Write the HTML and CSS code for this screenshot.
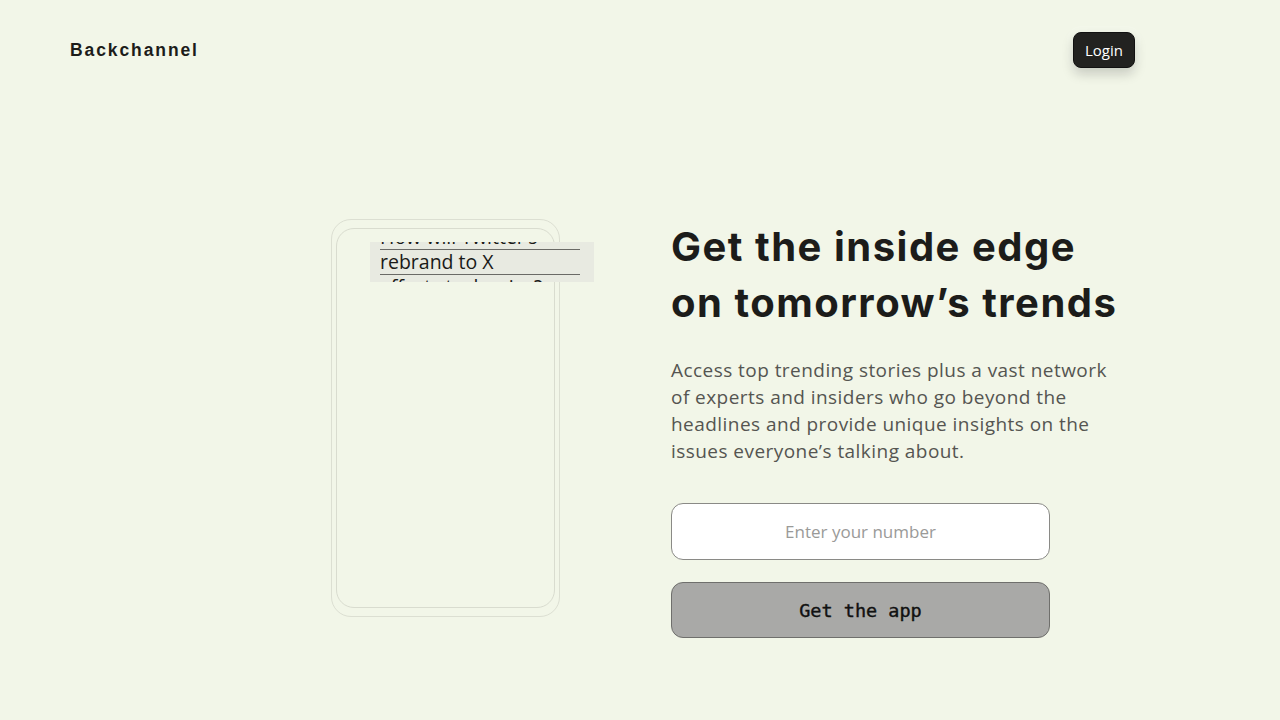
FILE: index.html
```html
<!DOCTYPE html>
<html lang="en">
<head>
<meta charset="utf-8">
<title>Backchannel</title>
<link rel="stylesheet" href="styles.css">
</head>
<body>
<header class="topbar">
  <div class="brand">Backchannel</div>
  <button class="login">Login</button>
</header>
<main class="hero">
  <div class="phone">
    <div class="phone-inner"></div>
    <div class="story">
      <div class="story-text">
        <span class="line">How will Twitter’s</span>
        <span class="line">rebrand to X</span>
        <span class="line">affect stock price?</span>
      </div>
    </div>
  </div>
  <section class="content">
    <h1 class="title">Get the inside edge<br>on tomorrow’s trends</h1>
    <p class="lede">Access top trending stories plus a vast network of experts and insiders who go beyond the headlines and provide unique insights on the issues everyone’s talking about.</p>
    <input class="number" type="tel" placeholder="Enter your number">
    <button class="cta">Get the app</button>
  </section>
</main>
</body>
</html>
```
FILE: styles.css
```css
* { box-sizing: border-box; }
html, body { margin: 0; height: 100%; }
body {
  background: #f2f6e8;
  font-family: "Open Sans", "Noto Sans", sans-serif;
  color: #1c1c1a;
  overflow: hidden;
}
.topbar {
  display: flex;
  justify-content: space-between;
  align-items: center;
  padding: 32px 145px 0 70px;
  height: 68px;
}
.brand {
  font-family: "Liberation Sans", Arial, sans-serif;
  font-weight: 700;
  font-size: 17.5px;
  letter-spacing: 1.9px;
  color: #1c1c1a;
}
.login {
  height: 36px;
  width: 62px;
  border: 1px solid #111;
  border-radius: 8px;
  background: #222220;
  color: #fff;
  font-family: "Open Sans", sans-serif;
  font-size: 15px;
  padding: 0;
  box-shadow: 0 6px 12px rgba(0,0,0,0.18), 0 0 0 6px rgba(255,255,255,0.12);
}
.hero {
  display: flex;
  align-items: flex-start;
  padding: 151px 0 0 331px;
  gap: 111px;
}
.phone {
  position: relative;
  width: 229px;
  height: 398px;
  border: 1px solid #dcdfd2;
  border-radius: 20px;
  padding: 8px 4px 8px 4px;
  flex: none;
}
.phone-inner {
  width: 100%;
  height: 100%;
  border: 1px solid #d9dccf;
  border-radius: 18px;
}
.story {
  position: absolute;
  left: 38px;
  top: 22px;
  width: 224px;
  height: 40px;
  background: #e8eae1;
  overflow: hidden;
}
.story-text {
  margin-top: -17px;
  padding-left: 10px;
  display: flex;
  flex-direction: column;
}
.line {
  display: block;
  width: 200px;
  font-size: 19.5px;
  line-height: 24px;
  color: #1a1a18;
  border-bottom: 1px solid #6a6a66;
  white-space: nowrap;
}
.content {
  width: 470px;
  display: flex;
  flex-direction: column;
}
.title {
  margin: 0;
  font-family: Inter, sans-serif;
  font-weight: 700;
  font-size: 40px;
  line-height: 56px;
  letter-spacing: 1.5px;
  color: #1c1c1a;
}
.lede {
  margin: 26px 0 0;
  width: 442px;
  font-size: 19px;
  letter-spacing: 0.45px;
  line-height: 27px;
  color: #555551;
}
.number {
  margin-top: 38px;
  width: 379px;
  height: 57px;
  border: 1px solid #8a8a86;
  border-radius: 12px;
  background: #fff;
  text-align: center;
  font-family: "Open Sans", sans-serif;
  font-size: 17px;
  color: #333;
}
.number::placeholder { color: #9a9a98; }
.cta {
  margin-top: 22px;
  width: 379px;
  height: 56px;
  border: 1px solid #6f6f6c;
  border-radius: 12px;
  background: #a9a9a7;
  font-family: "DejaVu Sans Mono", "Liberation Mono", monospace;
  font-weight: 400;
  -webkit-text-stroke: 0.4px #111;
  font-size: 18.5px;
  color: #111;
  padding: 0;
}
```
